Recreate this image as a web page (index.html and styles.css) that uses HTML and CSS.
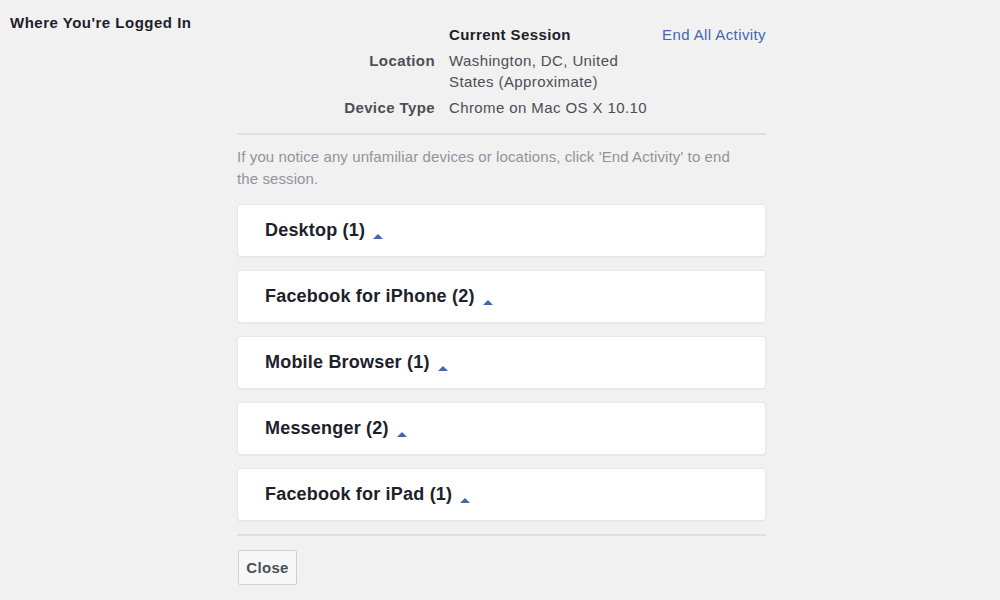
FILE: index.html
```html
<!DOCTYPE html>
<html lang="en">
<head>
    <meta charset="UTF-8">
    <meta name="viewport" content="width=device-width, initial-scale=1.0">
    <title>Where You're Logged In</title>
    <link rel="stylesheet" href="styles.css">
</head>
<body>
    <div class="settings-row">
        <!-- Section title -->
        <h3 class="section-title">Where You're Logged In</h3>

        <div class="section-content">
            <!-- Current session details -->
            <div class="session-table">
                <div class="session-label"></div>
                <div class="session-value session-heading">Current Session</div>
                <a href="#" class="end-link">End All Activity</a>

                <div class="session-label">Location</div>
                <div class="session-value">Washington, DC, United States (Approximate)</div>
                <div></div>

                <div class="session-label">Device Type</div>
                <div class="session-value">Chrome on Mac OS X 10.10</div>
                <div></div>
            </div>

            <div class="divider"></div>

            <p class="notice">If you notice any unfamiliar devices or locations, click 'End Activity' to end the session.</p>

            <!-- Device groups -->
            <div class="device-list">
                <div class="device-card"><span class="device-name">Desktop (1)</span><span class="caret"></span></div>
                <div class="device-card"><span class="device-name">Facebook for iPhone (2)</span><span class="caret"></span></div>
                <div class="device-card"><span class="device-name">Mobile Browser (1)</span><span class="caret"></span></div>
                <div class="device-card"><span class="device-name">Messenger (2)</span><span class="caret"></span></div>
                <div class="device-card"><span class="device-name">Facebook for iPad (1)</span><span class="caret"></span></div>
            </div>

            <div class="divider bottom-divider"></div>

            <button class="close-button">Close</button>
        </div>
    </div>
</body>
</html>
```
FILE: styles.css
```css
* {
    margin: 0;
    padding: 0;
    box-sizing: border-box;
    font-family: 'Liberation Sans', Arial, Helvetica, sans-serif;
}

body {
    background-color: #f1f1f1;
    color: #1d2129;
    font-size: 15px;
    letter-spacing: 0.4px;
    height: 100vh;
    overflow: hidden;
}

.settings-row {
    display: flex;
    padding: 14px 10px 0 10px;
}

.section-title {
    width: 227px;
    flex-shrink: 0;
    font-size: 15px;
    line-height: 18px;
    letter-spacing: 0.5px;
    font-weight: bold;
    color: #1d2129;
}

.section-content {
    width: 529px;
}

.session-table {
    display: grid;
    grid-template-columns: 212px 200px 1fr;
    row-gap: 5px;
    padding-top: 10px;
    line-height: 21px;
}

.session-label {
    text-align: right;
    padding-right: 14px;
    font-weight: bold;
    color: #4b4f56;
}

.session-value {
    color: #4b4f56;
}

.session-heading {
    font-weight: bold;
    color: #1d2129;
}

.end-link {
    text-align: right;
    white-space: nowrap;
    color: #4267b2;
    text-decoration: none;
}

.divider {
    height: 2px;
    background-color: #dddfe2;
    margin-top: 15px;
}

.notice {
    color: #90949c;
    line-height: 22px;
    letter-spacing: 0.1px;
    margin-top: 11px;
    padding-right: 30px;
}

.device-list {
    margin-top: 15px;
    display: flex;
    flex-direction: column;
    gap: 15px;
}

.device-card {
    height: 51px;
    margin-left: 1px;
    margin-right: 1px;
    display: flex;
    align-items: center;
    padding-left: 27px;
    background-color: white;
    border-radius: 3px;
    box-shadow: 0 0 0 1px #e6e7ea, 0 1px 2px rgba(0, 0, 0, 0.12);
}

.device-name {
    font-size: 18px;
    letter-spacing: 0.2px;
    font-weight: bold;
    color: #1d2129;
}

.caret {
    display: inline-block;
    width: 0;
    height: 0;
    margin-left: 8px;
    margin-top: 12px;
    border-left: 5px solid transparent;
    border-right: 5px solid transparent;
    border-bottom: 5px solid #4267b2;
}

.bottom-divider {
    margin-top: 14px;
}

.close-button {
    margin-top: 14px;
    margin-left: 1px;
    width: 59px;
    height: 35px;
    background-color: #f6f7f9;
    border: 1px solid #ced0d4;
    border-radius: 2px;
    font-size: 15px;
    letter-spacing: 0.3px;
    font-weight: bold;
    color: #4b4f56;
    cursor: pointer;
}
```
